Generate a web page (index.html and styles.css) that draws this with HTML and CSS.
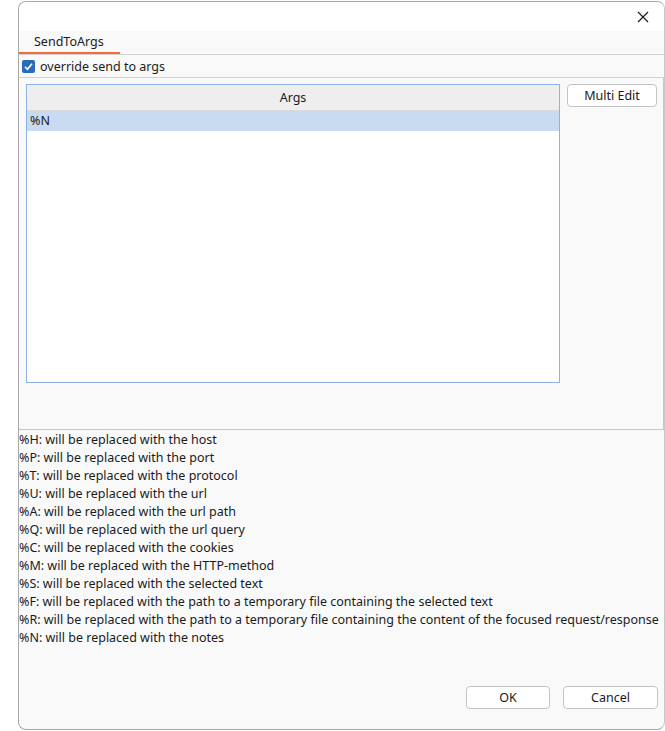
FILE: index.html
```html
<!DOCTYPE html>
<html>
<head>
<meta charset="utf-8">
<link rel="stylesheet" href="styles.css">
</head>
<body>
<div class="window">
  <div class="titlebar">
    <svg class="close" width="12" height="12" viewBox="0 0 12 12"><path d="M1 1L11 11M11 1L1 11" stroke="#1a1a1a" stroke-width="1.2"/></svg>
  </div>
  <div class="tabs">
    <div class="tab">SendToArgs</div>
  </div>
  <div class="checkrow">
    <span class="checkbox"><svg width="13" height="13" viewBox="0 0 13 13"><path d="M3 6.8L5.4 9.2L10 3.8" fill="none" stroke="#fff" stroke-width="1.6"/></svg></span>
    <span>override send to args</span>
  </div>
  <div class="panel">
    <div class="table">
      <div class="thead">Args</div>
      <div class="row selected">%N</div>
    </div>
    <div class="side">
      <button class="btn multi">Multi Edit</button>
    </div>
  </div>
  <div class="help">
    <div>%H: will be replaced with the host</div>
    <div>%P: will be replaced with the port</div>
    <div>%T: will be replaced with the protocol</div>
    <div>%U: will be replaced with the url</div>
    <div>%A: will be replaced with the url path</div>
    <div>%Q: will be replaced with the url query</div>
    <div>%C: will be replaced with the cookies</div>
    <div>%M: will be replaced with the HTTP-method</div>
    <div>%S: will be replaced with the selected text</div>
    <div>%F: will be replaced with the path to a temporary file containing the selected text</div>
    <div>%R: will be replaced with the path to a temporary file containing the content of the focused request/response</div>
    <div>%N: will be replaced with the notes</div>
  </div>
  <div class="footer">
    <button class="btn ok">OK</button>
    <button class="btn cancel">Cancel</button>
  </div>
</div>
</body>
</html>
```

FILE: styles.css
```css
* { box-sizing: border-box; }
html, body { margin: 0; padding: 0; background: #ffffff; }
body {
  font-family: "Noto Sans", "Open Sans", sans-serif;
  font-size: 12.5px;
  color: #1b1b1b;
  width: 665px;
  height: 731px;
  overflow: hidden;
}
.window {
  margin: 1px 0 0 18px;
  width: 647px;
  height: 729px;
  border: 1px solid #a8a8a8;
  border-right-color: #c8c8c8;
  border-radius: 8px;
  background: #f9f9f9;
  overflow: hidden;
  display: flex;
  flex-direction: column;
}
.titlebar {
  height: 29px;
  background: #ffffff;
  display: flex;
  align-items: center;
  justify-content: flex-end;
  padding-right: 15px;
  flex: none;
}
.tabs {
  height: 24px;
  border-bottom: 1px solid #d3d3d3;
  display: flex;
  flex: none;
}
.tab {
  width: 101px;
  padding-left: 15px;
  line-height: 22px;
  border-bottom: 2px solid #f26b3a;
  color: #1b1b1b;
}
.checkrow {
  height: 23px;
  border-bottom: 1px solid #d3d3d3;
  display: flex;
  align-items: center;
  padding-left: 3px;
  gap: 5px;
  flex: none;
}
.checkbox {
  width: 13px;
  height: 13px;
  background: #2b6cb8;
  border-radius: 2px;
  display: flex;
}
.panel {
  height: 352px;
  border-bottom: 1px solid #c6c6c6;
  border-right: 1px solid #c6c6c6;
  display: flex;
  padding: 6px 6px 0 7px;
  gap: 7px;
  flex: none;
}
.table {
  width: 534px;
  height: 299px;
  border: 1px solid #8db3e2;
  background: #ffffff;
}
.thead {
  height: 26px;
  background: #eeeeee;
  border-bottom: 1px solid #dadada;
  text-align: center;
  line-height: 26px;
}
.row {
  height: 20px;
  line-height: 20px;
  padding-left: 3px;
}
.row.selected { background: #c9dbf0; }
.side { display: flex; flex-direction: column; }
.btn {
  font-family: inherit;
  font-size: 12.5px;
  color: #1b1b1b;
  background: #ffffff;
  border: 1px solid #c4c4c4;
  border-radius: 4px;
  height: 23px;
  padding: 0;
}
.multi { width: 90px; }
.help {
  padding-top: 1px;
  line-height: 18px;
  white-space: nowrap;
  flex: 1;
}
.footer {
  display: flex;
  justify-content: flex-end;
  gap: 13px;
  padding: 0 6px 20px 0;
  flex: none;
}
.ok { width: 84px; }
.cancel { width: 95px; }
```
